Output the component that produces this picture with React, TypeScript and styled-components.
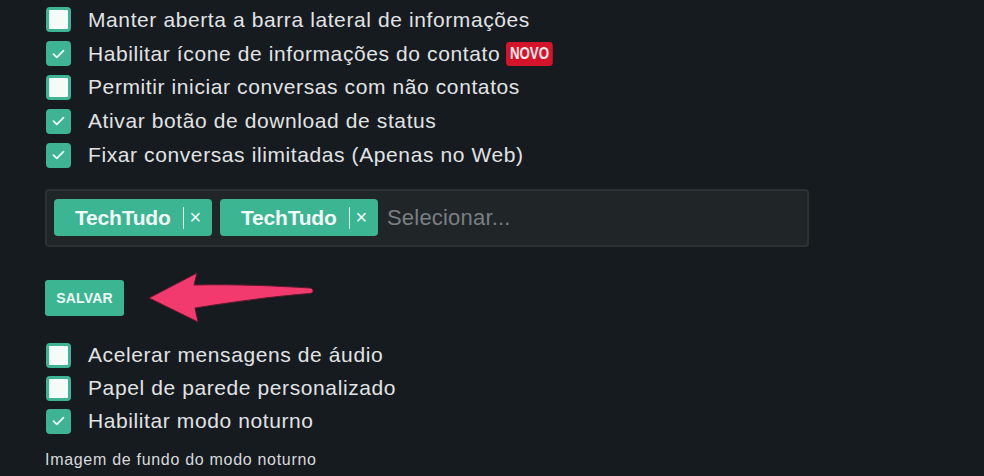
import * as React from 'react';
import styled, { createGlobalStyle } from 'styled-components';

const Global = createGlobalStyle`
    html, body {
        margin: 0;
        padding: 0;
        background: #161b20;
    }
    body {
        font-family: "Liberation Sans", Arial, sans-serif;
        color: #e3e5e6;
    }
`

const Page = styled.div`
    width: 984px;
    height: 476px;
    overflow: hidden;
    padding: 3px 0 0 45px;
    box-sizing: border-box;
`

const List = styled.div<{ $pitch: number }>`
    display: flex;
    flex-direction: column;

    & > label {
        height: ${p => p.$pitch}px;
    }
`

const Row = styled.label`
    display: flex;
    align-items: center;
    gap: 17px;
    padding-left: 1px;
    font-size: 21px;
    letter-spacing: 0.6px;
    color: #e1e3e4;
`

const Text = styled.span`
    display: flex;
    align-items: center;
`

const Box = styled.span<{ $checked: boolean }>`
    width: 25px;
    height: 25px;
    box-sizing: border-box;
    border-radius: 4px;
    display: flex;
    align-items: center;
    justify-content: center;
    background: ${p => (p.$checked ? '#3fb494' : '#f4fbf9')};
    border: 3px solid #3fb494;
    flex-shrink: 0;
`

const Badge = styled.span`
    margin-left: 6px;
    height: 24px;
    display: flex;
    align-items: center;
    background: #d4142a;
    color: #fde8ea;
    font-size: 17px;
    font-weight: 700;
    padding: 0 5px;
    border-radius: 4px;
    letter-spacing: 0;
    transform: scaleX(0.78);
    transform-origin: left center;
`

const Select = styled.div`
    margin-top: 17px;
    width: 764px;
    height: 58px;
    box-sizing: border-box;
    background: #202528;
    border: 2px solid #2c3134;
    border-radius: 4px;
    display: flex;
    align-items: center;
    gap: 8px;
    padding: 0 7px;
`

const Chip = styled.span`
    display: flex;
    align-items: center;
    height: 37px;
    width: 158px;
    box-sizing: border-box;
    background: #3cb592;
    border-radius: 4px;
    padding: 0 0 0 21px;
    color: #f2fbf8;
`

const ChipLabel = styled.span`
    font-size: 21px;
    font-weight: 700;
    letter-spacing: -0.2px;
`

const ChipRemove = styled.span`
    display: flex;
    align-items: center;
    margin-left: 12px;
    padding-left: 6px;
    height: 22px;
    border-left: 1px solid #d8f4ec;
    font-size: 20px;
    font-weight: 300;
`

const Placeholder = styled.span`
    margin-left: 1px;
    font-size: 22px;
    letter-spacing: 0.2px;
    color: #7a7f83;
`

const SaveRow = styled.div`
    display: flex;
    align-items: center;
    height: 54px;
    margin-top: 24px;
    margin-bottom: 14px;
`

const SaveButton = styled.button`
    width: 79px;
    height: 36px;
    border: none;
    border-radius: 3px;
    background: #3cb592;
    color: #eefaf6;
    font-family: "Liberation Sans", Arial, sans-serif;
    font-size: 14px;
    font-weight: 700;
    letter-spacing: 0.2px;
    padding: 0;
`

const Arrow = styled.svg`
    margin-left: 23px;
    flex-shrink: 0;
`

const Caption = styled.div`
    margin-top: 13px;
    font-size: 16px;
    letter-spacing: 0.7px;
    color: #d8dadb;
`

const Check = () => (
    <svg width="13" height="10" viewBox="0 0 13 10">
        <path d="M1.5 5.2 L4.8 8.3 L11.5 1.6" fill="none" stroke="#eafaf5" strokeWidth="1.8" strokeLinecap="round" strokeLinejoin="round" />
    </svg>
)

const Option = ({ label, checked, children }: { label: string; checked: boolean; children?: React.ReactNode }) => (
    <Row>
        <Box $checked={checked}>{checked && <Check />}</Box>
        <Text>
            {label}
            {children}
        </Text>
    </Row>
)

const App = () => {
    const tags = ['TechTudo', 'TechTudo'];

    return (
        <Page>
            <Global />
            <List $pitch={33.8}>
                <Option label="Manter aberta a barra lateral de informações" checked={false} />
                <Option label="Habilitar ícone de informações do contato" checked={true}>
                    <Badge>NOVO</Badge>
                </Option>
                <Option label="Permitir iniciar conversas com não contatos" checked={false} />
                <Option label="Ativar botão de download de status" checked={true} />
                <Option label="Fixar conversas ilimitadas (Apenas no Web)" checked={true} />
            </List>

            <Select>
                {tags.map((t, i) => (
                    <Chip key={i}>
                        <ChipLabel>{t}</ChipLabel>
                        <ChipRemove>×</ChipRemove>
                    </Chip>
                ))}
                <Placeholder>Selecionar...</Placeholder>
            </Select>

            <SaveRow>
                <SaveButton>SALVAR</SaveButton>
                <Arrow width="170" height="54" viewBox="0 0 170 54">
                    <path
                        d="M2 27 L50 2 L47 14 C90 13 130 15 163 17 C167 17.5 167 22 163 22.5 C130 25 92 30 48 37 L51 51 Z"
                        fill="#f23a6f"
                        stroke="#5a1a2c"
                        strokeWidth="1"
                        strokeLinejoin="round"
                    />
                </Arrow>
            </SaveRow>

            <List $pitch={33}>
                <Option label="Acelerar mensagens de áudio" checked={false} />
                <Option label="Papel de parede personalizado" checked={false} />
                <Option label="Habilitar modo noturno" checked={true} />
            </List>

            <Caption>Imagem de fundo do modo noturno</Caption>
        </Page>
    );
};

export default App;
